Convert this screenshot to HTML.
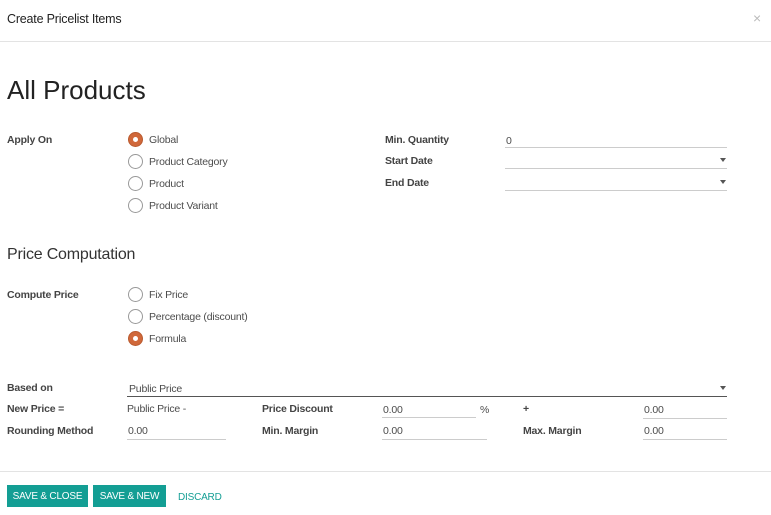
<!DOCTYPE html>
<html><head><style>
body{margin:0;width:771px;height:515px;background:#fff;font-family:"Liberation Sans",sans-serif;color:#4c4c4c;position:relative;overflow:hidden;font-size:10.5px;letter-spacing:-0.2px}
.a{position:absolute;white-space:nowrap;margin-top:1px}
.b{font-weight:bold;color:#444}
.r{position:absolute;width:13px;height:13px;border:1px solid #999;border-radius:50%;background:#fff}
.r.on{background:#d0683a;border-color:#b95a2f}
.r.on:after{content:"";position:absolute;left:4px;top:4px;width:5px;height:5px;border-radius:50%;background:#fff}
.u{position:absolute;border-bottom:1px solid #ccc;height:0}
.btn{position:absolute;top:485px;height:22px;background:#139e94;color:#fff;font-size:10px;line-height:24px;text-align:center}
.caret{position:absolute;width:0;height:0;border-left:3px solid transparent;border-right:3px solid transparent;border-top:4px solid #555}
</style></head><body>
<div class="a" style="left:7px;top:11px;font-size:12.5px;color:#222">Create Pricelist Items</div>
<div class="a" style="left:753px;top:9px;font-size:14px;color:#bbb">×</div>
<div class="u" style="left:0;top:41px;width:771px;border-color:#e3e3e3"></div>
<div class="a" style="left:7px;top:74px;font-size:26px;color:#222;letter-spacing:0">All Products</div>

<div class="a b" style="left:7px;top:133px">Apply On</div>
<div class="r on" style="left:128px;top:132px"></div><div class="a" style="left:149px;top:133px">Global</div>
<div class="r" style="left:128px;top:154px"></div><div class="a" style="left:149px;top:155px">Product Category</div>
<div class="r" style="left:128px;top:176px"></div><div class="a" style="left:149px;top:177px">Product</div>
<div class="r" style="left:128px;top:198px"></div><div class="a" style="left:149px;top:199px">Product Variant</div>

<div class="a b" style="left:385px;top:133px">Min. Quantity</div>
<div class="a" style="left:506px;top:134px">0</div><div class="u" style="left:505px;top:147px;width:222px"></div>
<div class="a b" style="left:385px;top:154px">Start Date</div>
<div class="u" style="left:505px;top:168px;width:222px"></div><div class="caret" style="left:720px;top:158px"></div>
<div class="a b" style="left:385px;top:176px">End Date</div>
<div class="u" style="left:505px;top:190px;width:222px"></div><div class="caret" style="left:720px;top:180px"></div>

<div class="a" style="left:7px;top:245px;font-size:16px;color:#333">Price Computation</div>
<div class="a b" style="left:7px;top:288px">Compute Price</div>
<div class="r" style="left:128px;top:287px"></div><div class="a" style="left:149px;top:288px">Fix Price</div>
<div class="r" style="left:128px;top:309px"></div><div class="a" style="left:149px;top:310px">Percentage (discount)</div>
<div class="r on" style="left:128px;top:331px"></div><div class="a" style="left:149px;top:332px">Formula</div>

<div class="a b" style="left:7px;top:381px">Based on</div>
<div class="a" style="left:129px;top:382px">Public Price</div>
<div class="u" style="left:127px;top:396px;width:600px;border-color:#555"></div><div class="caret" style="left:720px;top:386px"></div>

<div class="a b" style="left:7px;top:402px">New Price =</div>
<div class="a" style="left:127px;top:402px">Public Price -</div>
<div class="a b" style="left:262px;top:402px">Price Discount</div>
<div class="a" style="left:383px;top:403px">0.00</div><div class="u" style="left:382px;top:417px;width:94px"></div>
<div class="a" style="left:480px;top:403px">%</div>
<div class="a b" style="left:523px;top:402px">+</div>
<div class="a" style="left:644px;top:403px">0.00</div><div class="u" style="left:643px;top:418px;width:84px"></div>

<div class="a b" style="left:7px;top:424px">Rounding Method</div>
<div class="a" style="left:128px;top:424px">0.00</div><div class="u" style="left:127px;top:439px;width:99px"></div>
<div class="a b" style="left:262px;top:424px">Min. Margin</div>
<div class="a" style="left:383px;top:424px">0.00</div><div class="u" style="left:382px;top:439px;width:105px"></div>
<div class="a b" style="left:523px;top:424px">Max. Margin</div>
<div class="a" style="left:644px;top:424px">0.00</div><div class="u" style="left:643px;top:439px;width:84px"></div>

<div class="u" style="left:0;top:471px;width:771px;border-color:#e3e3e3"></div>
<div class="btn" style="left:7px;width:81px">SAVE &amp; CLOSE</div>
<div class="btn" style="left:93px;width:73px">SAVE &amp; NEW</div>
<div class="a" style="left:178px;top:491px;font-size:10px;color:#139e94">DISCARD</div>
</body></html>
